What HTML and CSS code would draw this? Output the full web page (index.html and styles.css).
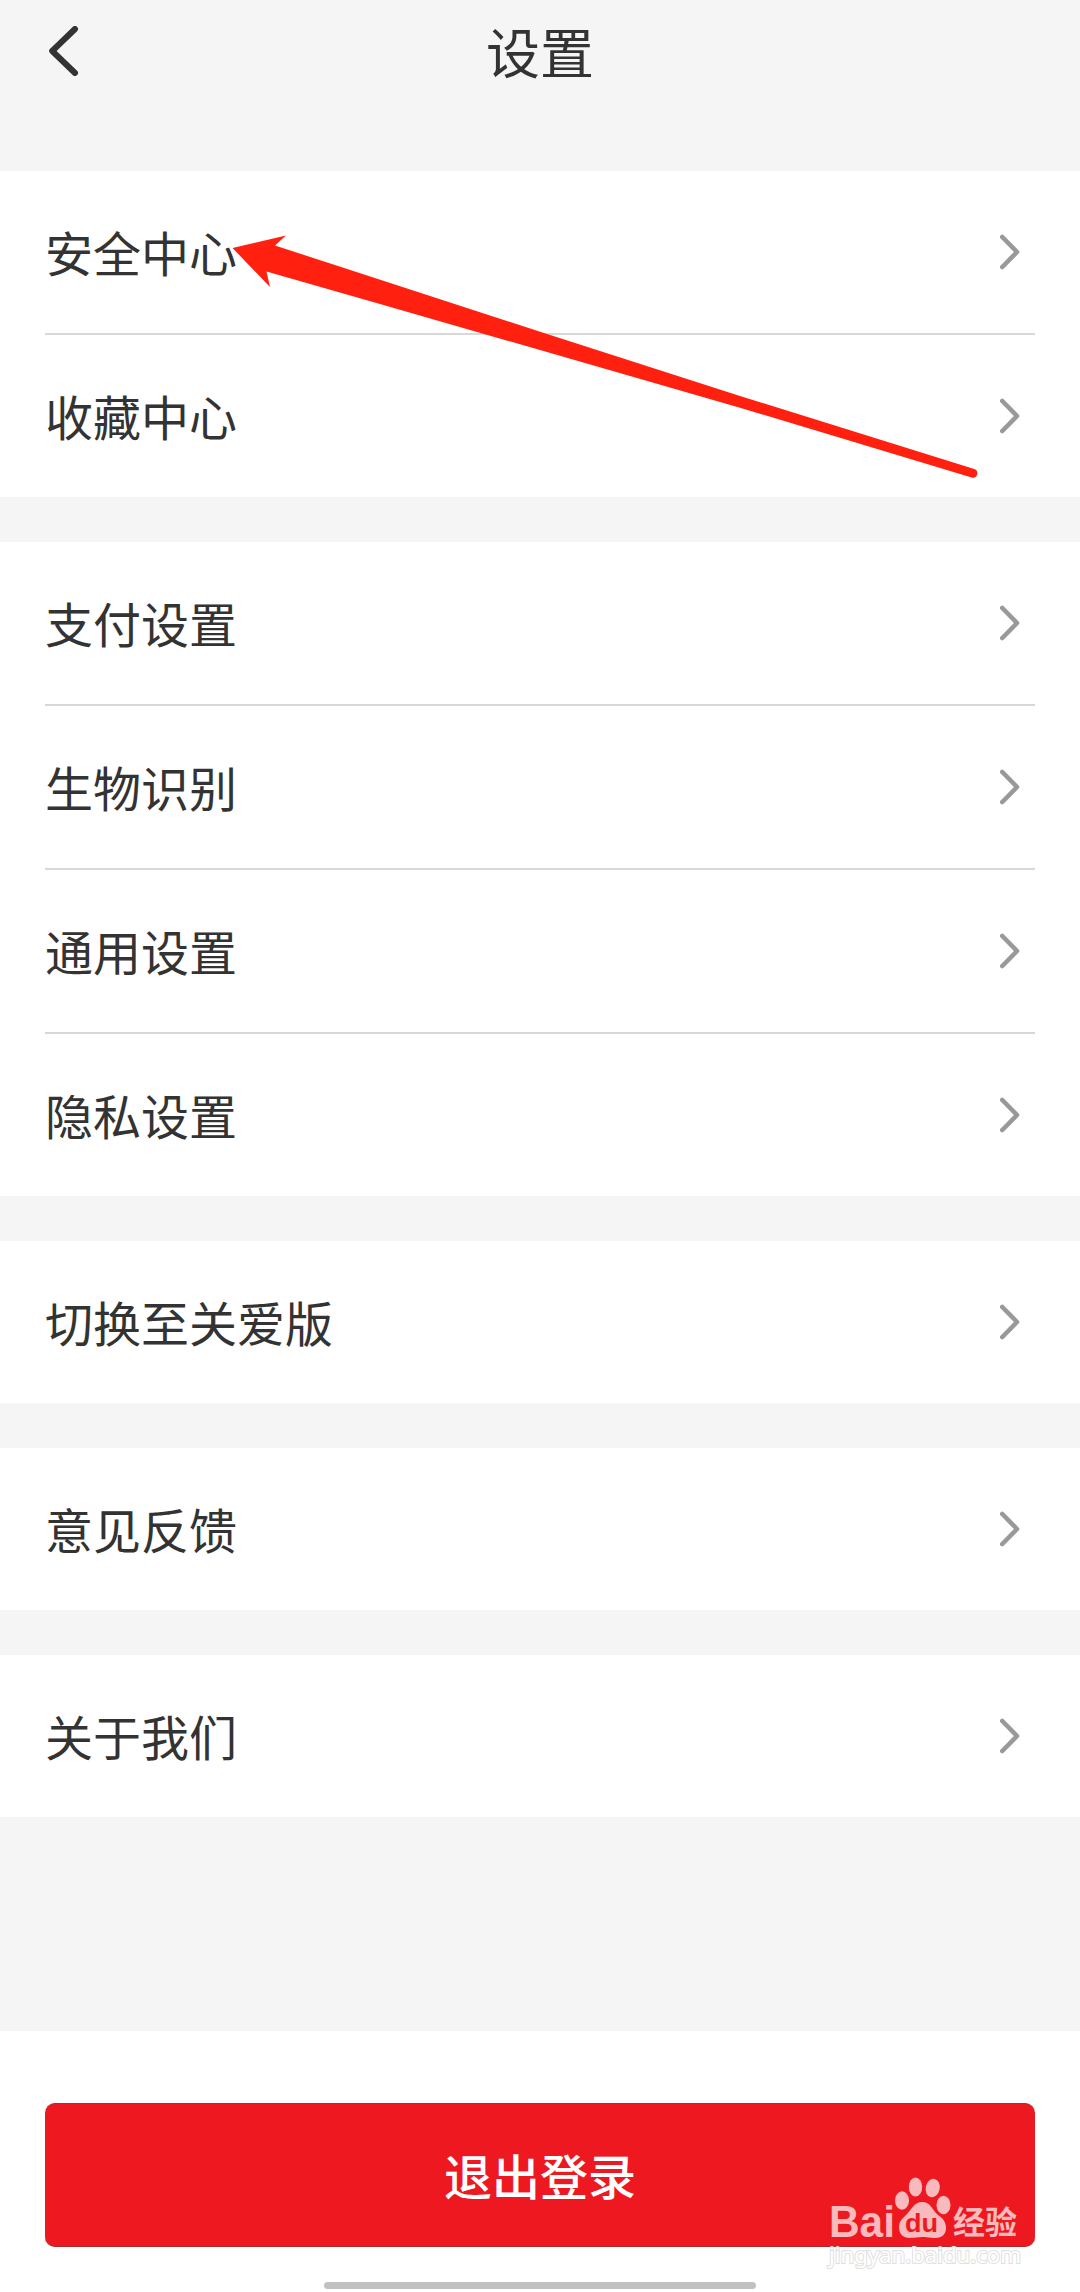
FILE: index.html
```html
<!DOCTYPE html>
<html lang="zh-CN">
<head>
    <meta charset="UTF-8">
    <meta name="viewport" content="width=device-width, initial-scale=1.0">
    <title>设置</title>
    <link rel="stylesheet" href="styles.css">
</head>
<body>
    <!-- shared icons -->
    <svg class="icon-defs" width="0" height="0">
        <symbol id="chevron" viewBox="0 0 20 36">
            <path d="M2.3 3 L17 18 L2.3 33" fill="none" stroke="#999" stroke-width="4.6" stroke-linecap="round" stroke-linejoin="round"/>
        </symbol>
    </svg>

    <header class="header">
        <svg class="back" viewBox="0 0 30 50">
            <path d="M26 3 L3.2 25 L26 47" fill="none" stroke="#333" stroke-width="6" stroke-linecap="round" stroke-linejoin="round"/>
        </svg>
        <h1 class="title">设置</h1>
    </header>

    <main class="groups">
        <ul class="group">
            <li class="row"><span class="label">安全中心</span><svg class="chevron"><use href="#chevron"/></svg></li>
            <li class="row"><span class="label">收藏中心</span><svg class="chevron"><use href="#chevron"/></svg></li>
        </ul>
        <ul class="group">
            <li class="row"><span class="label">支付设置</span><svg class="chevron"><use href="#chevron"/></svg></li>
            <li class="row"><span class="label">生物识别</span><svg class="chevron"><use href="#chevron"/></svg></li>
            <li class="row"><span class="label">通用设置</span><svg class="chevron"><use href="#chevron"/></svg></li>
            <li class="row"><span class="label">隐私设置</span><svg class="chevron"><use href="#chevron"/></svg></li>
        </ul>
        <ul class="group">
            <li class="row"><span class="label">切换至关爱版</span><svg class="chevron"><use href="#chevron"/></svg></li>
        </ul>
        <ul class="group">
            <li class="row"><span class="label">意见反馈</span><svg class="chevron"><use href="#chevron"/></svg></li>
        </ul>
        <ul class="group">
            <li class="row"><span class="label">关于我们</span><svg class="chevron"><use href="#chevron"/></svg></li>
        </ul>
    </main>

    <footer class="footer">
        <button class="logout">退出登录</button>
        <div class="home-bar"></div>
    </footer>

    <!-- red pointer over the first group -->
    <svg class="pointer" viewBox="0 0 760 250">
        <path d="M2.5 18 L56 5.5 L45 15.5 L314 103 L510 166 L745 239.2 A4.6 4.6 0 0 1 742.5 247.8 L510 177.7 L150 74 L36.5 41.5 L40 57 Z" fill="#ff2010"/>
    </svg>

    <svg class="watermark" viewBox="0 0 210 100">
        <g class="mark">
            <text class="bai" x="9" y="61.5" textLength="66" lengthAdjust="spacingAndGlyphs">Bai</text>
            <ellipse cx="82" cy="25.5" rx="7" ry="9.3"/>
            <ellipse cx="95.5" cy="12" rx="6.7" ry="9.5"/>
            <ellipse cx="112.7" cy="13" rx="7" ry="9.3" transform="rotate(12 112.7 13)"/>
            <ellipse cx="123.5" cy="30" rx="7" ry="9.2"/>
            <path d="M102 27 C111 27 112 35 118 40 C124 44 126 48 126 53 C126 60 121 63 115 63 C109 63 107 62 102 62 C97 62 95 63 90 63 C83 63 79 59 79 52 C79 46 83 43 87 39 C92 34 94 27 102 27 Z"/>
            <text class="cn" x="133" y="59">经验</text>
        </g>
        <text class="du" x="85" y="57" textLength="33" lengthAdjust="spacingAndGlyphs">du</text>
        <text class="url" x="9" y="87.5" textLength="192" lengthAdjust="spacingAndGlyphs">jingyan.baidu.com</text>
    </svg>
</body>
</html>
```

FILE: styles.css
```css
* {
    box-sizing: border-box;
    margin: 0;
    padding: 0;
}

body {
    position: relative;
    display: flex;
    flex-direction: column;
    width: 1080px;
    height: 2292px;
    overflow: hidden;
    background-color: #f5f5f5;
    color: #333;
    font-family: "Noto Sans CJK SC", sans-serif;
}

.icon-defs {
    position: absolute;
}

.header {
    display: flex;
    align-items: flex-start;
    height: 171px;
    padding: 26px 49px 0;
}

.back {
    width: 30px;
    height: 50px;
}

.title {
    flex: 1;
    margin-right: 30px;
    font-size: 54px;
    font-weight: 400;
    line-height: 49px;
    text-align: center;
}

.groups {
    display: flex;
    flex-direction: column;
    gap: 45px;
}

.group {
    padding: 0 45px;
    background-color: white;
    list-style: none;
}

.row {
    display: flex;
    align-items: center;
    justify-content: space-between;
    height: 162px;
    padding-right: 15px;
}

.row + .row {
    height: 164px;
    border-top: 2px solid #d8d8d8;
}

.label {
    padding-bottom: 2px;
    font-size: 48px;
    line-height: 60px;
}

.chevron {
    width: 20px;
    height: 36px;
}

.footer {
    display: flex;
    flex-direction: column;
    align-items: center;
    height: 261px;
    margin-top: auto;
    padding: 72px 45px 0;
    background-color: white;
}

.logout {
    width: 100%;
    height: 144px;
    padding-bottom: 3px;
    border: solid #b02a30;
    border-width: 1px 0;
    border-radius: 10px;
    background-color: #ee1820;
    color: white;
    font-family: inherit;
    font-size: 48px;
    font-weight: 500;
}

.home-bar {
    width: 432px;
    height: 7px;
    margin-top: 35px;
    border-radius: 4px;
    background-color: #c1c1c1;
}

.pointer {
    position: absolute;
    left: 230px;
    top: 230px;
    width: 760px;
    height: 250px;
}

.watermark {
    position: absolute;
    left: 820px;
    top: 2175px;
    width: 210px;
    height: 100px;
}

.mark {
    fill: #fab9bd;
}

.bai {
    font: bold 44px "Liberation Sans", sans-serif;
}

.cn {
    font-size: 32px;
    font-weight: 700;
}

.du {
    fill: #ee1820;
    font: bold 26px "Liberation Sans", sans-serif;
}

.url {
    fill: white;
    stroke: #e0e0e0;
    stroke-width: 2px;
    paint-order: stroke;
    font: 22px "Noto Sans", sans-serif;
}
```
